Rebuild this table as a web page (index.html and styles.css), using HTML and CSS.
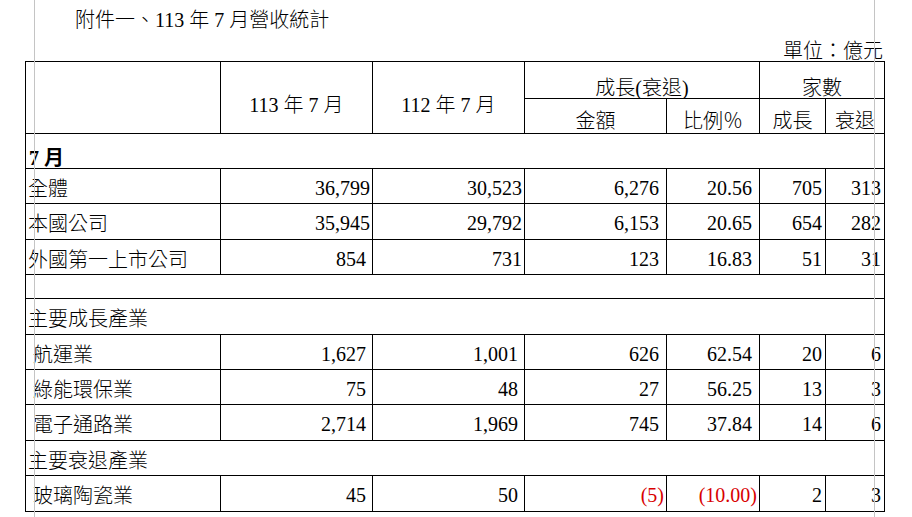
FILE: index.html
```html
<!DOCTYPE html>
<html lang="zh-Hant">
<head>
<meta charset="utf-8">
<title>附件一、113年7月營收統計</title>
<link rel="stylesheet" href="styles.css">
</head>
<body>
<div class="page">
  <h1 class="title">附件一、113 年 7 月營收統計</h1>
  <div class="sheet">
    <p class="unit">單位：億元</p>
    <table class="stats">
      <colgroup>
        <col class="c-label">
        <col class="c-period">
        <col class="c-period">
        <col class="c-amount">
        <col class="c-ratio">
        <col class="c-grow">
        <col class="c-decl">
      </colgroup>
      <thead>
        <tr class="h36">
          <th rowspan="2"></th>
          <th rowspan="2" class="period">113 年 7 月</th>
          <th rowspan="2" class="period">112 年 7 月</th>
          <th colspan="2" class="top">成長(衰退)</th>
          <th colspan="2" class="top">家數</th>
        </tr>
        <tr class="h35">
          <th class="sub">金額</th>
          <th class="sub">比例％</th>
          <th class="sub">成長</th>
          <th class="sub">衰退</th>
        </tr>
      </thead>
      <tbody>
        <tr class="h35"><td colspan="7" class="section month">7 月</td></tr>
        <tr class="h35">
          <td class="label">全體</td>
          <td class="num">36,799</td>
          <td class="num">30,523</td>
          <td class="num acc">6,276</td>
          <td class="num acc">20.56</td>
          <td class="num cnt">705</td>
          <td class="num cnt">313</td>
        </tr>
        <tr class="h36">
          <td class="label">本國公司</td>
          <td class="num">35,945</td>
          <td class="num">29,792</td>
          <td class="num acc">6,153</td>
          <td class="num acc">20.65</td>
          <td class="num cnt">654</td>
          <td class="num cnt">282</td>
        </tr>
        <tr class="h35">
          <td class="label">外國第一上市公司</td>
          <td class="num wide">854</td>
          <td class="num">731</td>
          <td class="num acc">123</td>
          <td class="num acc">16.83</td>
          <td class="num cnt">51</td>
          <td class="num cnt">31</td>
        </tr>
        <tr class="h24"><td colspan="7" class="blank"></td></tr>
        <tr class="h36"><td colspan="7" class="section">主要成長產業</td></tr>
        <tr class="h35">
          <td class="label indent">航運業</td>
          <td class="num wide">1,627</td>
          <td class="num wide">1,001</td>
          <td class="num acc">626</td>
          <td class="num acc">62.54</td>
          <td class="num cnt">20</td>
          <td class="num cnt">6</td>
        </tr>
        <tr class="h35">
          <td class="label indent">綠能環保業</td>
          <td class="num wide">75</td>
          <td class="num wide">48</td>
          <td class="num acc">27</td>
          <td class="num acc">56.25</td>
          <td class="num cnt">13</td>
          <td class="num cnt">3</td>
        </tr>
        <tr class="h36">
          <td class="label indent">電子通路業</td>
          <td class="num wide">2,714</td>
          <td class="num wide">1,969</td>
          <td class="num acc">745</td>
          <td class="num acc">37.84</td>
          <td class="num cnt">14</td>
          <td class="num cnt">6</td>
        </tr>
        <tr class="h35"><td colspan="7" class="section">主要衰退產業</td></tr>
        <tr class="h36">
          <td class="label indent">玻璃陶瓷業</td>
          <td class="num wide">45</td>
          <td class="num wide">50</td>
          <td class="num neg">(5)</td>
          <td class="num neg">(10.00)</td>
          <td class="num cnt">2</td>
          <td class="num cnt">3</td>
        </tr>
      </tbody>
    </table>
  </div>
  <div class="guide guide-left"></div>
  <div class="guide guide-right"></div>
</div>
</body>
</html>
```
FILE: styles.css
```css
html, body {
  margin: 0;
  padding: 0;
  background: #fff;
}

body {
  font-family: "Liberation Serif", "Noto Sans CJK TC", serif;
  font-size: 20px;
  line-height: 20px;
  font-weight: 300;
  color: #000;
}

.page {
  position: relative;
  width: 912px;
  height: 517px;
  overflow: hidden;
}

.title {
  margin: 0;
  padding: 10px 0 0 75px;
  font-size: 20px;
  line-height: 20px;
  font-weight: 300;
}

.sheet {
  margin-left: 25px;
  width: 860px;
}

.unit {
  margin: 11px 0 0;
  padding-right: 2px;
  text-align: right;
  line-height: 20px;
}

.stats {
  border-collapse: collapse;
  table-layout: fixed;
  width: 860px;
}

.c-label { width: 195px; }
.c-period { width: 152px; }
.c-amount { width: 142px; }
.c-ratio { width: 93px; }
.c-grow { width: 66px; }
.c-decl { width: 59px; }

.h36 { height: 36px; }
.h35 { height: 35px; }
.h24 { height: 24px; }

.stats th,
.stats td {
  border: 1px solid #000;
  padding: 0;
  vertical-align: top;
  font-weight: 300;
  white-space: nowrap;
  overflow: hidden;
  line-height: 20px;
}

.stats th {
  text-align: center;
}

.stats th.period {
  padding-top: 33px;
}

.stats th.top {
  padding-top: 16px;
}

.stats th.sub {
  padding-top: 12px;
}

.stats td.section,
.stats td.label {
  text-align: left;
  padding-top: 10px;
  padding-left: 2px;
}

.stats td.month {
  font-weight: bold;
  padding-top: 14px;
  padding-left: 3px;
}

.stats td.indent {
  padding-left: 7px;
}

.stats td.num {
  text-align: right;
  padding-top: 9px;
  padding-right: 2px;
}

.stats td.wide {
  padding-right: 6px;
}

.stats td.acc {
  padding-right: 7px;
}

.stats td.cnt {
  padding-right: 3px;
}

.stats td.neg {
  padding-right: 2px;
  color: #d80000;
}

.guide {
  position: absolute;
  top: 0;
  bottom: 0;
  width: 1px;
  background: #c4c4c4;
}

.guide-left { left: 34px; }
.guide-right { left: 874px; }
```
